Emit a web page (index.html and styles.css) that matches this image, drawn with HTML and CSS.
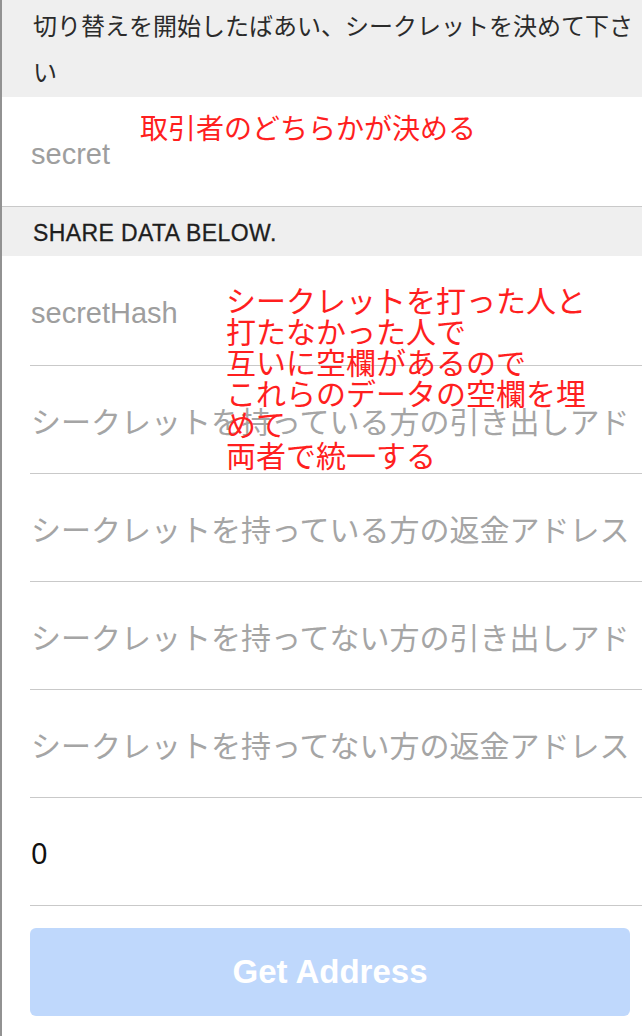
FILE: index.html
```html
<!DOCTYPE html>
<html lang="ja">
<head>
<meta charset="utf-8">
<title>Swap</title>
<link rel="stylesheet" href="styles.css">
</head>
<body>
<div class="page">
  <div class="notice">切り替えを開始したばあい、シークレットを決めて下さい</div>
  <div class="field field-full"><span class="ph">secret</span></div>
  <div class="section">SHARE DATA BELOW.</div>
  <div class="list">
    <div class="field"><span class="ph">secretHash</span></div>
    <div class="field"><span class="ph cjk">シークレットを持っている方の引き出しアドレス</span></div>
    <div class="field"><span class="ph cjk">シークレットを持っている方の返金アドレス</span></div>
    <div class="field"><span class="ph cjk">シークレットを持ってない方の引き出しアドレス</span></div>
    <div class="field"><span class="ph cjk">シークレットを持ってない方の返金アドレス</span></div>
    <div class="field"><span class="val">0</span></div>
  </div>
  <div class="actions"><button class="btn" type="button">Get Address</button></div>

  <div class="note note-1">取引者のどちらかが決める</div>
  <div class="note note-2">シークレットを打った人と<br>打たなかった人で<br>互いに空欄があるので<br>これらのデータの空欄を埋めて<br>両者で統一する</div>
</div>
</body>
</html>
```
FILE: styles.css
```css
html, body {
  margin: 0;
  padding: 0;
  background: #ffffff;
}

.page {
  position: relative;
  width: 640px;
  height: 1036px;
  border-left: 2px solid #929292;
  background: #ffffff;
  font-family: "Liberation Sans", "Noto Sans CJK JP", sans-serif;
  overflow: hidden;
}

.notice {
  background: #efefef;
  color: #2b2b2b;
  font-family: "Noto Sans CJK JP", sans-serif;
  font-size: 24px;
  line-height: 46px;
  padding: 2px 6px 3px 31px;
  height: 92px;
}

.field {
  display: flex;
  align-items: center;
  height: 107px;
  margin-left: 28px;
  padding: 0 11px 0 1px;
  border-bottom: 1px solid #c9c9c9;
}

.field-full {
  margin-left: 0;
  padding-left: 29px;
  height: 109px;
}

.ph {
  color: #9e9e9e;
  font-size: 29px;
  white-space: nowrap;
  overflow: hidden;
  width: 100%;
  padding-top: 6px;
}

.ph.cjk {
  font-family: "Noto Sans CJK JP", sans-serif;
  font-size: 30px;
  color: #a5a5a5;
  padding-top: 0;
}

.val {
  color: #111111;
  font-size: 29px;
  font-family: "Noto Sans", "Liberation Sans", sans-serif;
  padding-top: 2px;
}

.section {
  background: #efefef;
  color: #1e1e1e;
  font-size: 23px;
  font-weight: 500;
  letter-spacing: 0.4px;
  height: 49px;
  line-height: 52px;
  padding-left: 31px;
  -webkit-text-stroke: 0.3px #1e1e1e;
}

.list {
  display: flex;
  flex-direction: column;
}

.list .field:first-child {
  height: 109px;
}

.actions {
  padding: 22px 12px 0 28px;
}

.btn {
  display: block;
  width: 100%;
  height: 88px;
  border: none;
  border-radius: 6px;
  background: #bfd8fc;
  color: #ffffff;
  font-family: "Liberation Sans", sans-serif;
  font-weight: bold;
  font-size: 33px;
  padding: 0;
}

.note {
  position: absolute;
  color: #ff1f1f;
  font-family: "Noto Sans CJK JP", sans-serif;
}

.note-1 {
  left: 138px;
  top: 110px;
  font-size: 28px;
  line-height: 34px;
}

.note-2 {
  left: 224px;
  top: 284px;
  width: 365px;
  font-size: 30px;
  line-height: 31px;
}
```
